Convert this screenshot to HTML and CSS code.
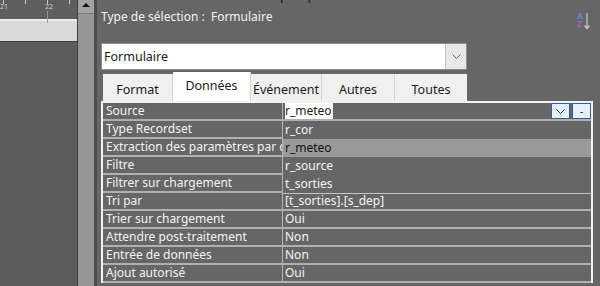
FILE: index.html
```html
<!DOCTYPE html>
<html lang="fr">
<head>
    <meta charset="UTF-8" />
    <title>Feuille de propriétés</title>
    <link rel="stylesheet" href="styles.css">
</head>
<body>
    <div class="app">
        <div class="canvas">
            <div class="ruler">
                <span class="ruler-num n21">21</span>
                <span class="ruler-num n22">22</span>
            </div>
            <div class="band"></div>
            <div class="canvas-body"></div>
        </div>
        <div class="vscroll">
            <div class="vscroll-up"><span class="tri"></span></div>
        </div>
        <div class="splitter"></div>

        <div class="sheet">
            <div class="sheet-title"><span>Feuille de propriétés</span></div>
            <div class="sel-row">
                <span class="sel-text">Type de sélection :&nbsp; Formulaire</span>
                <span class="sort-icon">
                    <span class="az"><span class="a">A</span><span class="z">Z</span></span>
                    <svg width="6" height="18" viewBox="0 0 6 18"><path d="M3 1 V16 M0.5 13.5 L3 16.5 L5.5 13.5" stroke="#c9c9c9" stroke-width="1.2" fill="none"/></svg>
                </span>
            </div>

            <div class="combo">
                <span class="combo-text">Formulaire</span>
                <span class="combo-btn">
                    <svg width="9" height="5" viewBox="0 0 9 5"><path d="M0.5 0.5 L4.5 4.5 L8.5 0.5" stroke="#666" fill="none"/></svg>
                </span>
            </div>

            <div class="tabs">
                <div class="tab t-format">Format</div>
                <div class="tab t-data active">Données</div>
                <div class="tab t-event">Événement</div>
                <div class="tab t-other">Autres</div>
                <div class="tab t-all">Toutes</div>
            </div>

            <div class="grid">
                <div class="row">
                    <div class="label">Source</div>
                    <div class="value editing">
                        <span class="sel-val">r_meteo</span>
                        <span class="cell-btns">
                            <span class="cell-btn"><svg width="9" height="5" viewBox="0 0 9 5"><path d="M0.5 0.5 L4.5 4.5 L8.5 0.5" stroke="#333" fill="none"/></svg></span>
                            <span class="cell-btn dash">-</span>
                        </span>
                    </div>
                </div>
                <div class="row"><div class="label">Type Recordset</div><div class="value"></div></div>
                <div class="row"><div class="label">Extraction des paramètres par défaut</div><div class="value"></div></div>
                <div class="row"><div class="label">Filtre</div><div class="value"></div></div>
                <div class="row"><div class="label">Filtrer sur chargement</div><div class="value"></div></div>
                <div class="row"><div class="label">Tri par</div><div class="value">[t_sorties].[s_dep]</div></div>
                <div class="row"><div class="label">Trier sur chargement</div><div class="value">Oui</div></div>
                <div class="row"><div class="label">Attendre post-traitement</div><div class="value">Non</div></div>
                <div class="row"><div class="label">Entrée de données</div><div class="value">Non</div></div>
                <div class="row"><div class="label">Ajout autorisé</div><div class="value">Oui</div></div>

                <ul class="dropdown">
                    <li>r_cor</li>
                    <li class="hover">r_meteo</li>
                    <li>r_source</li>
                    <li>t_sorties</li>
                </ul>
            </div>
        </div>
    </div>
</body>
</html>
```

FILE: styles.css
```css
body {
    margin: 0;
    background: #666666;
    font-family: 'Noto Sans', 'Open Sans', sans-serif;
    font-size: 12px;
    overflow: hidden;
}
.app {
    display: flex;
    height: 286px;
}

/* left design surface */
.canvas {
    width: 77px;
    display: flex;
    flex-direction: column;
    background: #5c5c5c;
    border-right: 1px solid #3e3e3e;
}
.ruler {
    position: relative;
    height: 19px;
    background: #5e5e5e repeating-linear-gradient(90deg, transparent 0 3px, #c8c8c8 3px 4px, transparent 4px 22px) top left / 100% 4px no-repeat;
}
.ruler-num {
    position: absolute;
    top: 3px;
    font-size: 7px;
    line-height: 7px;
    color: #d0d0d0;
}
.n21 { left: 0; }
.n22 { left: 45px; }
.n22::after {
    content: "";
    position: absolute;
    left: 2px;
    top: 8px;
    width: 1px;
    height: 12px;
    background: #9a9a9a;
}
.band {
    height: 20px;
    background: #d9d9d9;
    border-top: 2px solid #ebebeb;
    border-bottom: 1px solid #424242;
}
.canvas-body {
    flex: 1;
}
.vscroll {
    width: 16px;
    background: #959595;
}
.vscroll-up {
    height: 14px;
    background: #a3a3a3;
    border-bottom: 1px solid #7d7d7d;
    display: flex;
    justify-content: center;
    padding-top: 3px;
    box-sizing: border-box;
}
.tri {
    width: 0;
    height: 0;
    border-left: 4px solid transparent;
    border-right: 4px solid transparent;
    border-bottom: 4px solid #111;
}
.splitter {
    width: 3px;
    background: #4c4c4c;
}

/* property sheet */
.sheet {
    flex: 1;
    background: #666666;
    padding-left: 4px;
    display: flex;
    flex-direction: column;
}
.sheet-title {
    height: 4px;
    overflow: hidden;
    padding-left: 98px;
}
.sheet-title span {
    display: block;
    margin-top: -17px;
    font-size: 17px;
    line-height: 20px;
    color: #2a2a2a;
}
.sel-row {
    height: 39px;
    display: flex;
    justify-content: space-between;
    align-items: flex-start;
    padding-right: 10px;
}
.sel-text {
    margin-top: 1px;
    line-height: 24px;
    font-size: 12px;
    color: #f2f2f2;
}
.sort-icon {
    display: flex;
    align-items: flex-start;
    margin-top: 8px;
    gap: 1px;
}
.az {
    display: flex;
    flex-direction: column;
    font-size: 8px;
    line-height: 8px;
    font-weight: bold;
}
.az .a { color: #5b8fd8; }
.az .z { color: #9468cc; }

.combo {
    width: 366px;
    height: 27px;
    box-sizing: border-box;
    background: #ffffff;
    border: 1px solid #8c8c8c;
    display: flex;
    align-items: center;
}
.combo-text {
    flex: 1;
    padding-left: 2px;
    font-size: 12.5px;
    color: #1a1a1a;
}
.combo-btn {
    width: 20px;
    height: 100%;
    background: #e8e8e8;
    border-left: 1px solid #c8c8c8;
    display: flex;
    align-items: center;
    justify-content: center;
}

.tabs {
    display: flex;
    align-items: flex-end;
    height: 29px;
    margin-top: 2px;
    margin-left: 2px;
}
.tab {
    height: 27px;
    box-sizing: border-box;
    background: #f0f0f0;
    border-right: 1px solid #d4d4d4;
    color: #1a1a1a;
    font-size: 12.5px;
    display: flex;
    align-items: center;
    justify-content: center;
    padding-top: 3px;
}
.tab.active {
    height: 29px;
    background: #ffffff;
    padding-top: 0;
    padding-bottom: 3px;
}
.t-format { width: 70px; }
.t-data { width: 78px; }
.t-event { width: 71px; }
.t-other { width: 73px; }
.t-all { width: 72px; border-right: none; }

.grid {
    position: relative;
    width: 492px;
    box-sizing: border-box;
    border: 2px solid #f2f2f2;
    border-bottom: none;
    background: #666666;
}
.row {
    display: flex;
    height: 18px;
    box-sizing: border-box;
    border-bottom: 2px solid #b0b0b0;
    color: #f4f4f4;
    font-size: 12px;
    line-height: 16px;
}
.label {
    width: 180px;
    flex-shrink: 0;
    box-sizing: border-box;
    padding-left: 3px;
    border-right: 1px solid #b4b4b4;
    white-space: nowrap;
    overflow: hidden;
}
.value {
    flex: 1;
    padding-left: 2px;
    white-space: nowrap;
    overflow: hidden;
    display: flex;
}
.sel-val {
    background: #ffffff;
    color: #1a1a1a;
    padding-right: 1px;
}
.cell-btns {
    margin-left: auto;
    display: flex;
    gap: 2px;
}
.cell-btn {
    width: 19px;
    height: 16px;
    box-sizing: border-box;
    background: #e5f1fb;
    border: 1px solid #2e5f9e;
    display: flex;
    align-items: center;
    justify-content: center;
    color: #222;
    line-height: 12px;
}
.dash { font-size: 11px; }

.dropdown {
    position: absolute;
    left: 180px;
    top: 18px;
    width: 308px;
    height: 72px;
    margin: 0;
    padding: 0;
    list-style: none;
    background: #666666;
    border-bottom: 1px solid #c4c4c4;
    color: #f4f4f4;
    font-size: 12px;
}
.dropdown li {
    height: 18px;
    line-height: 17px;
    padding-left: 2px;
}
.dropdown li.hover {
    background: #9a9a9a;
    color: #111;
}
```
